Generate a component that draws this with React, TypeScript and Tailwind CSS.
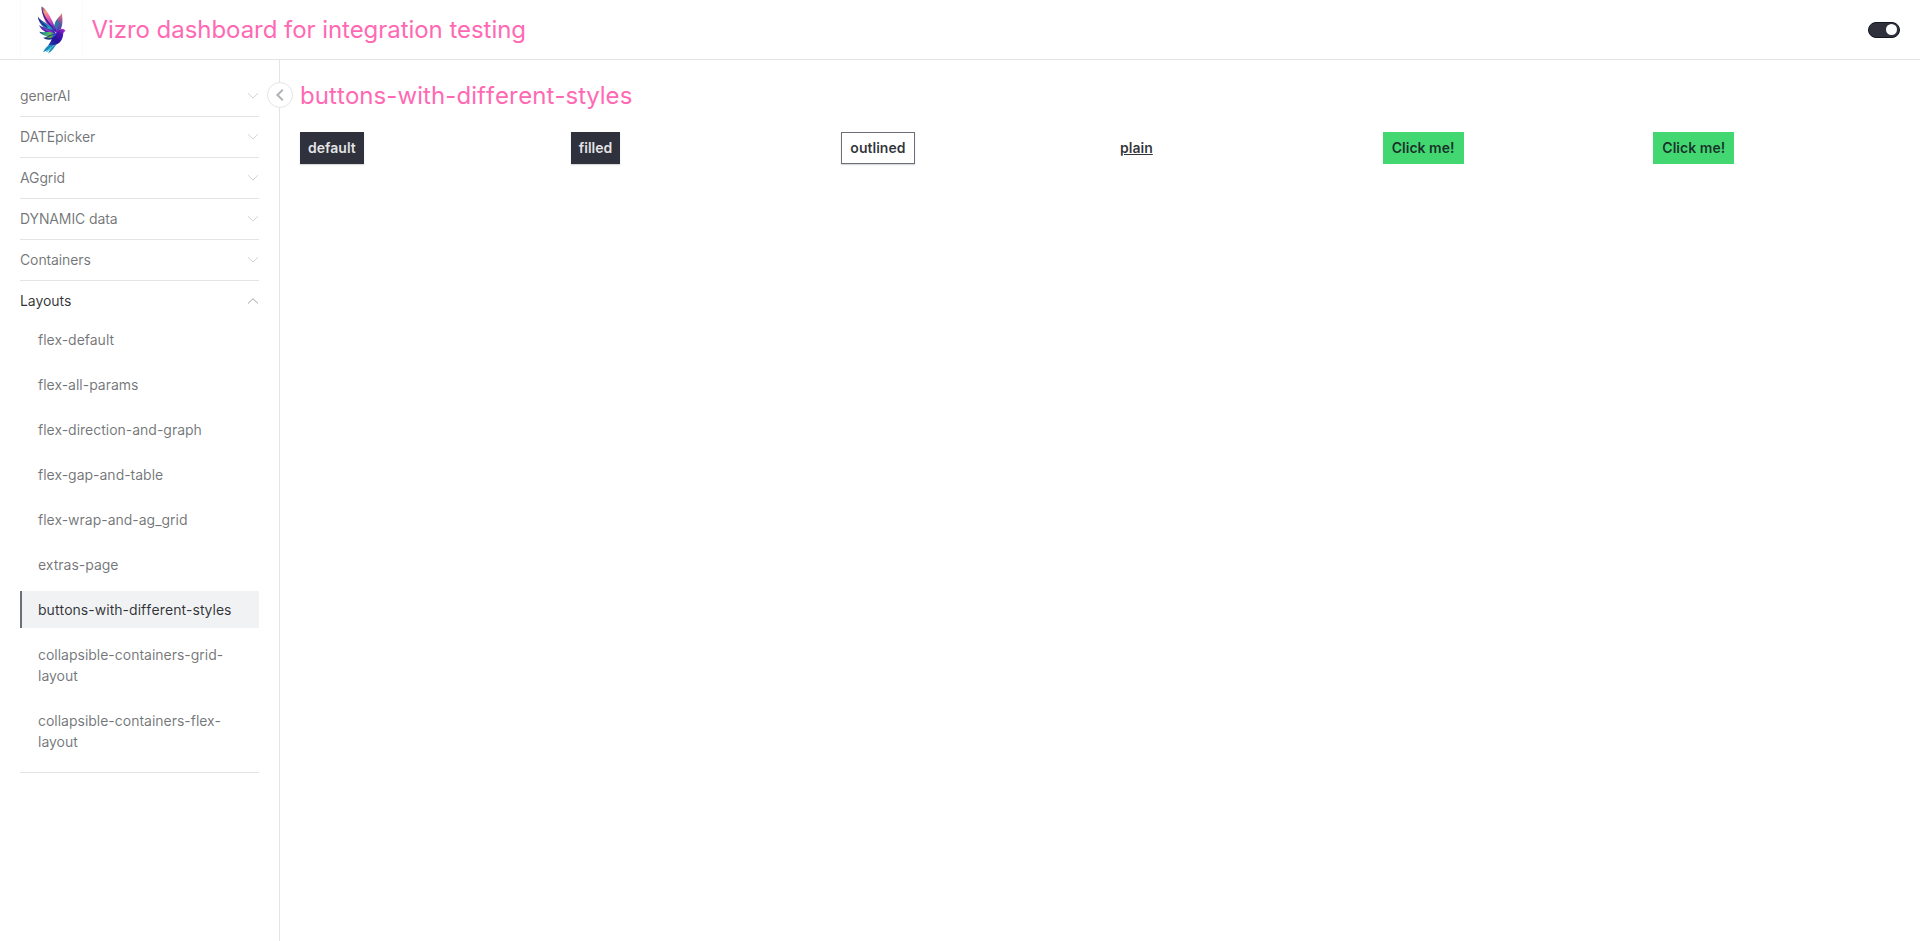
import React from "react";

const sections = ["generAI", "DATEpicker", "AGgrid", "DYNAMIC data", "Containers"];

const layoutPages = [
  "flex-default",
  "flex-all-params",
  "flex-direction-and-graph",
  "flex-gap-and-table",
  "flex-wrap-and-ag_grid",
  "extras-page",
  "buttons-with-different-styles",
  "collapsible-containers-grid-layout",
  "collapsible-containers-flex-layout",
];

const activePage = "buttons-with-different-styles";

function Logo() {
  return (
    <svg viewBox="0 0 34 53" className="h-[53px] w-[34px]" aria-hidden="true">
      <defs>
        <linearGradient id="wing" gradientUnits="userSpaceOnUse" x1="7" y1="4" x2="20" y2="28">
          <stop offset="0" stopColor="#7a4a86" />
          <stop offset="0.2" stopColor="#f7a07c" />
          <stop offset="0.45" stopColor="#ee62a6" />
          <stop offset="0.75" stopColor="#a135c9" />
          <stop offset="1" stopColor="#3a1ba8" />
        </linearGradient>
        <linearGradient id="back" gradientUnits="userSpaceOnUse" x1="27" y1="10" x2="20" y2="28">
          <stop offset="0" stopColor="#e3926c" />
          <stop offset="0.3" stopColor="#b85a94" />
          <stop offset="0.6" stopColor="#4c58a8" />
          <stop offset="1" stopColor="#7a25c4" />
        </linearGradient>
        <linearGradient id="body" gradientUnits="userSpaceOnUse" x1="29" y1="27" x2="16" y2="44">
          <stop offset="0" stopColor="#a02bc6" />
          <stop offset="0.25" stopColor="#4a16b0" />
          <stop offset="0.6" stopColor="#241499" />
          <stop offset="1" stopColor="#1f3da8" />
        </linearGradient>
        <linearGradient id="blue" gradientUnits="userSpaceOnUse" x1="3" y1="14" x2="19" y2="28">
          <stop offset="0" stopColor="#31237c" />
          <stop offset="0.45" stopColor="#1e76bd" />
          <stop offset="0.75" stopColor="#23a3c0" />
          <stop offset="1" stopColor="#3a25a8" />
        </linearGradient>
        <linearGradient id="green" gradientUnits="userSpaceOnUse" x1="4" y1="29" x2="20" y2="31">
          <stop offset="0" stopColor="#232c72" />
          <stop offset="0.35" stopColor="#289f8c" />
          <stop offset="0.7" stopColor="#68bb58" />
          <stop offset="1" stopColor="#2e4fb5" />
        </linearGradient>
      </defs>
      <path d="M26.8 10C25.5 13 21.5 15.5 20 20L18.5 27L22 30L25 28C28 23 27.8 15.5 26.8 10Z" fill="url(#back)" />
      <path d="M22.3 16.5C20 19 19.3 22 19.5 25L21.5 27L24 20Z" fill="#2b79a4" />
      <path d="M6.7 3.5C11 6 13.5 11 16 15.5C18 19 19.5 23 21.5 29L17 28C11 22 6.5 12 6.7 3.5Z" fill="url(#wing)" />
      <path d="M6.6 3.5C6.2 11 10 18 17.5 25.5L18 24C12.5 18 8.5 12 6.6 3.5Z" fill="#352092" />
      <path d="M2.8 13.5C5.5 18.5 12.5 19 19.5 27.5L18.5 30C11.5 27.5 4 22.5 2.8 13.5Z" fill="url(#blue)" />
      <path d="M2.8 13.5C4 19 8 23 13 25L10 21.5C6.5 19.5 4.5 17 2.8 13.5Z" fill="#2b2a8d" />
      <path d="M4 22C8.5 25.5 15 25 21 30L18.5 31.8C12 30 6.5 28 4 22Z" fill="#4c20a0" />
      <path d="M7 24.8C11 26 15 26.5 19 30C14.5 29 10.5 28 7 24.8Z" fill="#8a37cb" />
      <path d="M4.3 28.8C9.5 30 14 27.5 21 31L17.5 33.5C12 33.5 7.5 33 4.3 28.8Z" fill="url(#green)" />
      <path d="M8 34.8C12 35 14 30.5 22 31.5L18.5 36C14 37 11 37 8 34.8Z" fill="#25397f" />
      <path d="M10.5 34.9C14 34.5 15.5 32 20 32L16.3 34.8Z" fill="#5bb64c" />
      <path d="M30.5 28C29 25.3 26 25.5 23.8 27.5C21 30 18.5 32 17 35.5C16 38 15 40 13.3 42.2C18 43.4 23.5 42 26.2 37.5C27.6 35.2 28 33.5 28.2 31C28.3 29.5 29 28.5 30.5 28Z" fill="url(#body)" />
      <path d="M22.5 29C19.5 30.5 17.5 32.5 16.8 35.5L20 33Z" fill="#2a4ed0" />
      <path d="M14 41.8C12 43.5 9.8 46 8 49C12 48 15 46 19 42.3Z" fill="#1b86bb" />
      <path d="M19.8 42C17 44 14.3 46.5 13.2 50.5C16 49 18.8 45.5 21 42Z" fill="#1f8dbb" />
      <path d="M15.5 43.8L10.5 49.5L13 48.3L17.5 44Z" fill="#2fc0d4" />
    </svg>
  );
}

function Chevron({ open = false }: { open?: boolean }) {
  return (
    <svg viewBox="0 0 12 12" className="h-3 w-3" fill="none" aria-hidden="true">
      <path
        d={open ? "M1 8.5L6 3.7L11 8.5" : "M1 3.2L6 8L11 3.2"}
        className={open ? "stroke-[#a5a5a8]" : "stroke-[#d4d4d6]"}
      />
    </svg>
  );
}

const buttonBase =
  "flex h-8 items-center border text-sm font-semibold whitespace-nowrap tracking-[0.028px]";

export default function App() {
  return (
    <div className="flex h-[941px] w-full flex-col bg-white font-[Inter,sans-serif] text-[#141721]/88">
      <header className="flex h-[60px] shrink-0 items-center justify-between border-b border-[#e4e4e5] px-5">
        <div className="flex items-center">
          <div className="flex h-[59px] w-[63px] items-center justify-center border-x border-[#fbfbfb] pl-px">
            <Logo />
          </div>
          <h1 className="ml-[8.5px] text-2xl leading-8 font-normal tracking-[-0.048px] text-[#ff69b4]">
            Vizro dashboard for integration testing
          </h1>
        </div>
        <button aria-label="Toggle theme" className="flex h-4 w-8 items-center justify-end rounded-full border border-[#141721] bg-[#2f323d] pr-[2px]">
          <span className="h-[11px] w-[11px] rounded-full bg-white" />
        </button>
      </header>

      <div className="flex min-h-0 flex-1">
        <aside className="relative w-[280px] shrink-0 border-r border-[#e4e4e5] pt-4 pr-5 pl-5 text-sm leading-[21px] tracking-[-0.014px] text-[#141721]/60">
          <nav className="w-[239px]">
            {sections.map((name) => (
              <div key={name} className="flex h-[41px] items-center justify-between border-b border-[#e4e4e5]">
                <span className="pb-[2px] tracking-[-0.12px]">{name}</span>
                <Chevron />
              </div>
            ))}
            <div className="border-b border-[#e4e4e5] pb-3">
              <div className="flex h-10 items-center justify-between text-[#141721]/88">
                <span className="pb-[2px] tracking-[-0.05px]">Layouts</span>
                <Chevron open />
              </div>
              <ul className="flex flex-col gap-2">
                {layoutPages.map((page) => (
                  <li
                    key={page}
                    className={
                      page === activePage
                        ? "border-l-2 border-[#6c6f78] bg-[#f1f2f4] py-2 pr-4 pl-4 tracking-[0.03px] text-[#141721]/88 [font-kerning:none]"
                        : "border-l-2 border-transparent py-2 pr-4 pl-4"
                    }
                  >
                    {page}
                  </li>
                ))}
              </ul>
            </div>
          </nav>
          <button
            aria-label="Collapse navigation"
            className="absolute top-[22px] -right-[14px] flex h-[26px] w-[26px] items-center justify-center rounded-full border border-[#e4e4e5] bg-white"
          >
            <svg viewBox="0 0 12 12" className="h-3 w-3" fill="none" aria-hidden="true">
              <path d="M8.8 0.8L3.4 6L8.8 11.2" stroke="#b0b2b8" strokeWidth="2" />
            </svg>
          </button>
        </aside>

        <main className="flex-1 px-5 pt-5">
          <h2 className="text-2xl leading-8 font-normal tracking-[0.075px] text-[#ff69b4] [font-kerning:none]">buttons-with-different-styles</h2>
          <div className="mt-5 grid grid-cols-6 justify-items-start gap-6">
            <button className={`${buttonBase} border-[#2f323d] bg-[#2f323d] px-[7px] text-white/88 shadow-[0_1px_1px_rgba(20,23,33,0.16)]`}>default</button>
            <button className={`${buttonBase} border-[#2f323d] bg-[#2f323d] px-[7px] text-white/88 shadow-[0_1px_1px_rgba(20,23,33,0.16)]`}>filled</button>
            <button className={`${buttonBase} border-[#6c6f78] px-2 shadow-[0_1px_1px_rgba(20,23,33,0.16)]`}>outlined</button>
            <button className={`${buttonBase} border-transparent px-[7px] underline`}>plain</button>
            <button className={`${buttonBase} border-[#42d771] bg-[#42d771] px-2`}>Click me!</button>
            <button className={`${buttonBase} border-[#42d771] bg-[#42d771] px-2`}>Click me!</button>
          </div>
        </main>
      </div>
    </div>
  );
}
